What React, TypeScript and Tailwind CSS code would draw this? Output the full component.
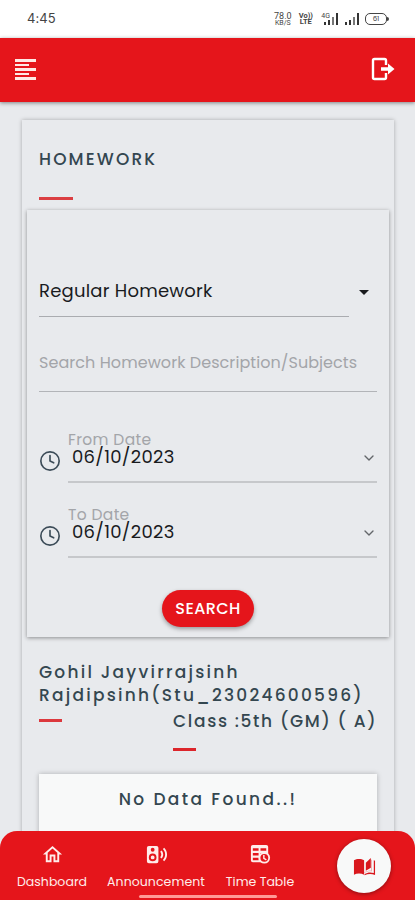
import { ChevronDown, Clock4 } from 'lucide-react'

const navItems = [
  { label: 'Dashboard', icon: HomeIcon, text: 'tracking-[0.04px]' },
  { label: 'Announcement', icon: SpeakerIcon, text: 'tracking-[0.08px]' },
  { label: 'Time Table', icon: TimeTableIcon, text: 'tracking-[0px]' },
]

function HomeIcon() {
  return (
    <svg viewBox="0 0 24 24" className="h-[23px] w-[23px] fill-current">
      <path d="M12 5.69L17 10.19V18H15V12H9V18H7V10.19L12 5.69M12 3L2 12H5V20H11V14H13V20H19V12H22L12 3Z" />
    </svg>
  )
}

function SpeakerIcon() {
  return (
    <svg viewBox="0 0 24 24" className="h-[23px] w-[23px] fill-current">
      <path d="M20.07 19.07L18.66 17.66C20.11 16.22 21 14.21 21 12C21 9.78 20.11 7.78 18.66 6.34L20.07 4.93C21.88 6.74 23 9.24 23 12C23 14.76 21.88 17.26 20.07 19.07M17.24 16.24L15.83 14.83C16.55 14.11 17 13.11 17 12C17 10.89 16.55 9.89 15.83 9.17L17.24 7.76C18.33 8.85 19 10.35 19 12C19 13.65 18.33 15.15 17.24 16.24M4 3H12A2 2 0 0 1 14 5V19A2 2 0 0 1 12 21H4A2 2 0 0 1 2 19V5A2 2 0 0 1 4 3M8 5A2 2 0 0 0 6 7A2 2 0 0 0 8 9A2 2 0 0 0 10 7A2 2 0 0 0 8 5M8 11A4 4 0 0 0 4 15A4 4 0 0 0 8 19A4 4 0 0 0 12 15A4 4 0 0 0 8 11M8 13A2 2 0 0 1 10 15A2 2 0 0 1 8 17A2 2 0 0 1 6 15A2 2 0 0 1 8 13Z" />
    </svg>
  )
}

function TimeTableIcon() {
  return (
    <svg viewBox="0 0 24 24" className="h-[23px] w-[23px]">
      <path
        fill="currentColor"
        fillRule="evenodd"
        d="M4 2H18A2 2 0 0 1 20 4V18A2 2 0 0 1 18 20H4A2 2 0 0 1 2 18V4A2 2 0 0 1 4 2M4 5.5V8H10V5.5ZM12 5.5V8H18V5.5ZM4 10.5V13H10V10.5ZM4 15.5V18H10V15.5ZM12 10.5V18H18V10.5Z"
      />
      <circle cx="16" cy="15.5" r="6" fill="currentColor" />
      <circle cx="16" cy="15.5" r="4.1" fill="#e5151b" />
      <path d="M15.5 12.5V16L18.1 17.5" fill="none" stroke="currentColor" strokeWidth="1.5" />
    </svg>
  )
}

function BookIcon() {
  return (
    <svg viewBox="0 0 24 24" className="h-[23px] w-[23px] fill-current">
      <path d="M1 5.5C4 3.6 8.5 3.6 11.6 5.5V20.6C8.5 19 4 19 1 20.6Z" />
      <path d="M13.4 8.2L18.6 3V13.2L13.4 16.5Z" />
      <path d="M12 20C15 18.1 18.5 17.9 21.7 18.9V5.5L23 6V20.8C19.5 19.4 15.5 19.5 12 21Z" />
      <path d="M19.8 5V17.2C17 16.8 14.2 17.4 12 18.8V17.8C14.2 16.6 16.7 16 18.9 16.1V5Z" opacity="0.35" />
    </svg>
  )
}

function LogoutIcon() {
  return (
    <svg viewBox="0 0 24 24" className="h-6 w-6">
      <path d="M15 8V3.5Q15 2 13.5 2H3.5Q2 2 2 3.5V20.5Q2 22 3.5 22H13.5Q15 22 15 20.5V16" fill="none" stroke="currentColor" strokeWidth="2.4" />
      <path d="M10 10.2H17V6.5L23.5 12L17 17.5V13.8H10Z" fill="currentColor" />
    </svg>
  )
}

function Signal() {
  return (
    <div className="flex items-end gap-[2px]">
      <span className="h-[3px] w-[2px] bg-[#333]" />
      <span className="h-[5px] w-[2px] bg-[#333]" />
      <span className="h-2 w-[2px] bg-[#777]" />
      <span className="h-3 w-[2px] bg-[#333]" />
    </div>
  )
}

function StatusBar() {
  return (
    <div className="flex h-[38px] shrink-0 items-center justify-between bg-white pr-[26px] pl-[27px] text-[#444]">
      <span className="font-['Inter',sans-serif] text-[13px] tracking-[0.1px]">4:45</span>
      <div className="flex h-3 items-center text-[#444]">
        <div className="flex w-[19px] flex-col items-center font-['Roboto',sans-serif] text-[9px] leading-[7px]">
          <span className="h-[7px]">78.0</span>
          <span className="h-[6px] text-[7px] leading-[6px]">KB/S</span>
        </div>
        <div className="ml-[6px] flex w-[15px] flex-col items-center font-['Roboto',sans-serif] text-[7.5px] leading-[6px] font-bold">
          <span>Vo))</span>
          <span>LTE</span>
        </div>
        <span className="ml-2 self-start font-['Roboto',sans-serif] text-[7px] leading-[7px]">4G</span>
        <div className="-ml-[6px]"><Signal /></div>
        <div className="ml-[7px]"><Signal /></div>
        <div className="ml-[6px] flex h-3 w-[22px] items-center justify-center rounded-[5px] border-[1.5px] border-[#444] text-[7px]">61</div>
        <span className="h-1 w-[2px] rounded-r bg-[#444]" />
      </div>
    </div>
  )
}

function DateField({ label }: { label: string }) {
  return (
    <div className="flex h-[75px]">
      <Clock4 className="mt-[20px] h-[22px] w-[22px] shrink-0 text-[#3c4c58]" strokeWidth={1.8} />
      <div className="ml-[7px] h-[53px] flex-1 border-b-2 border-[#c6c8cb]">
        <div className="h-[17px] text-[15.5px] leading-5 tracking-[0.35px] text-[#a3a5a9]">{label}</div>
        <div className="flex h-5 items-center justify-between pl-1 text-[18px] leading-5 tracking-[0.3px] text-[#191b1e]">
          06/10/2023
          <ChevronDown className="mt-[2px] h-4 w-4 text-[#63666a]" strokeWidth={2} />
        </div>
      </div>
    </div>
  )
}

export default function App() {
  return (
    <div className="relative flex h-[900px] w-[415px] flex-col overflow-hidden bg-[#e8eaed] font-['Poppins','Inter',sans-serif]">
      <StatusBar />
      <header className="flex h-16 shrink-0 items-center justify-between bg-[#e5151b] pr-5 pb-[2px] pl-[15px] text-white shadow-[0_1px_4px_rgba(0,0,0,0.45)]">
        <button className="flex flex-col gap-[2px]" aria-label="Menu">
          <span className="h-[3px] w-[21px] bg-[#ffe9e5]" />
          <span className="h-[2px] w-[14px] bg-[#ffe9e5]" />
          <span className="h-[3px] w-[21px] bg-[#ffe9e5]" />
          <span className="h-[2px] w-[14px] bg-[#ffe9e5]" />
          <span className="h-[3px] w-[21px] bg-[#ffe9e5]" />
        </button>
        <button aria-label="Logout"><LogoutIcon /></button>
      </header>

      <main className="mt-[18px] mr-[21px] ml-[22px] h-[800px] shrink-0 px-[5px] shadow-[0_0_4px_rgba(0,0,0,0.28)]">
        <div className="h-[90px] px-3 pt-[27px]">
          <h1 className="text-[17px] leading-6 font-medium tracking-[2.15px] text-[#334650]">HOMEWORK</h1>
          <div className="mt-[26px] h-[3px] w-[34px] bg-[#db3f43]" />
        </div>

        <section className="h-[427px] px-3 shadow-[0_1px_4px_rgba(0,0,0,0.4)]">
          <div className="flex h-[107px] items-end">
            <div className="h-[39px] w-[310px] border-b border-[#aaacb0] text-[18px] leading-[26px] tracking-[0.23px] text-[#191b1e]">Regular Homework</div>
            <span className="mb-[22px] ml-[10px] h-0 w-0 border-x-[5px] border-t-[5px] border-x-transparent border-t-[#191b1e]" />
          </div>
          <div className="h-[75px] border-b border-[#b2b4b8] pt-[34px] text-[16px] leading-6 tracking-[0.06px] text-[#a3a5a9]">Search Homework Description/Subjects</div>
          <div className="pt-[38px]">
            <DateField label="From Date" />
            <DateField label="To Date" />
          </div>
          <div className="flex justify-center pt-[10px]">
            <button className="h-[37px] w-[92px] rounded-full bg-[#e5151b] text-[16px] font-medium tracking-[0.4px] text-white shadow-[0_2px_4px_rgba(0,0,0,0.35)]">SEARCH</button>
          </div>
        </section>

        <section className="px-3 pt-[24px] text-[17px] leading-[23px] font-medium tracking-[1.67px] text-[#344750]">
          <h2 className="tracking-[2.23px] whitespace-nowrap">
            <span className="block">Gohil Jayvirrajsinh</span>
            <span className="block">Rajdipsinh(Stu_23024600596)</span>
          </h2>
          <div className="flex justify-between">
            <div className="mt-[12px] h-[3px] w-[23px] bg-[#dc383d]" />
            <div className="w-[204px] pt-[3px]">
              <p className="whitespace-nowrap">Class :5th (GM) ( A)</p>
              <div className="mt-[15px] h-[3px] w-[23px] bg-[#dc252b]" />
            </div>
          </div>
          <div className="mt-[23px] h-[100px] bg-[#f8f9f9] pt-[14px] text-center tracking-[2.4px] shadow-[0_0_5px_rgba(0,0,0,0.25)]">No Data Found..!</div>
        </section>
      </main>

      <nav className="absolute inset-x-0 bottom-0 flex h-[69px] rounded-t-[17px] bg-[#e5151b] text-[#ffecea]">
        {navItems.map(({ label, icon: Icon, text }) => (
          <a key={label} className="flex w-[104px] flex-col items-center pt-3">
            <Icon />
            <span className={`mt-auto mb-[8px] text-[12.5px] leading-5 ${text}`}>{label}</span>
          </a>
        ))}
        <a className="mt-[8px] ml-[25px] flex h-[54px] w-[54px] items-center justify-center rounded-full bg-[#f8f9f9] text-[#d9181e] shadow-[0_1px_4px_rgba(0,0,0,0.4)]" aria-label="Homework">
          <BookIcon />
        </a>
        <div className="absolute bottom-[2px] left-[139px] h-[3px] w-[138px] rounded-full bg-[#ff9a96]" />
      </nav>
    </div>
  )
}
